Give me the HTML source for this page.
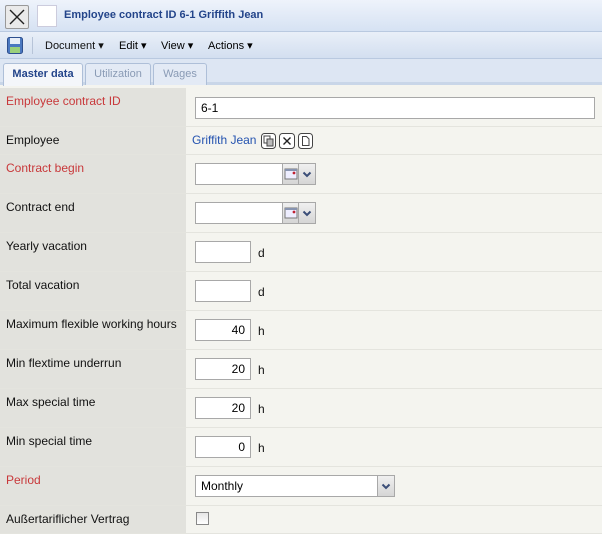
<!DOCTYPE html>
<html><head><style>
*{margin:0;padding:0;box-sizing:border-box}
body{width:602px;height:534px;overflow:hidden;font-family:"Liberation Sans",sans-serif;font-size:12px;background:#f4f4ef;position:relative}
.a{position:absolute}
.title{left:0;top:0;width:602px;height:32px;background:linear-gradient(#eef3fb,#d6e2f3);border-bottom:1px solid #b9c9e0}
.tb{left:0;top:32px;width:602px;height:27px;background:linear-gradient(#e9eff8,#d3dff0);border-bottom:1px solid #b9c9e0}
.tabs{left:0;top:59px;width:602px;height:26px;background:#dde6f3;border-bottom:3px solid #c9d6e8}
.tab{position:absolute;top:4px;height:22px;border:1px solid #aebfd8;border-bottom:none;background:#e3eaf5;color:#8a9bb5;font-size:11px;text-align:center;line-height:20px;border-radius:3px 3px 0 0}
.row{position:absolute;left:0;width:602px;border-bottom:1px solid #e4e4de}
.lab{position:absolute;left:0;top:0;bottom:0;width:186px;background:#e2e2dd;padding:6px 0 0 6px;color:#111}
.red{color:#c8383a}
.in{position:absolute;background:#fff;border:1px solid #a8a8a8;height:22px;padding:3px 5px;font-size:12px}
.r{text-align:right}
.u{position:absolute;font-size:12px;color:#111}
.dd{position:absolute;width:18px;height:22px;border:1px solid #a8a8a8;background:linear-gradient(#f0f0f0,#d5d5d5)}
</style></head><body>
<svg width="0" height="0" style="position:absolute"><defs>
<symbol id="chev" viewBox="0 0 16 20"><path d="M4.5 8.5L8 12L11.5 8.5" fill="none" stroke="#3b4e78" stroke-width="2"/></symbol>
<symbol id="cal" viewBox="0 0 16 20"><rect x="2" y="5" width="12" height="10" fill="#eef" stroke="#777"/><rect x="2" y="5" width="12" height="2" fill="#8894b0"/><circle cx="11" cy="9" r="1.4" fill="#c02030"/></symbol>
</defs></svg>
<div class="a title"></div>
<div class="a" style="left:5px;top:5px;width:24px;height:24px;border:1px solid #999;background:#eaeaea;border-radius:2px"><svg width="22" height="22"><path d="M4 4L18 18M18 4L4 18" stroke="#222" stroke-width="1.4"/></svg></div>
<div class="a" style="left:37px;top:5px;width:20px;height:22px;background:#fff;border:1px solid #ccd"></div>
<div class="a" style="left:64px;top:9px;font-weight:bold;font-size:11px;color:#23448a">Employee contract ID 6-1 Griffith Jean</div>
<div class="a tb"></div>
<svg class="a" style="left:7px;top:37px" width="16" height="17"><rect x="0.5" y="0.5" width="15" height="16" rx="2" fill="#4a78c0" stroke="#2d4f8e"/><rect x="3" y="1" width="10" height="6" fill="#e8eef8"/><rect x="3" y="10" width="10" height="6" fill="#9bd07a"/></svg>
<div class="a" style="left:32px;top:37px;width:1px;height:17px;background:#b7c4d8"></div>
<div class="a" style="left:45px;top:39px;font-size:11px;color:#111">Document ▾</div>
<div class="a" style="left:119px;top:39px;font-size:11px">Edit ▾</div>
<div class="a" style="left:161px;top:39px;font-size:11px">View ▾</div>
<div class="a" style="left:208px;top:39px;font-size:11px">Actions ▾</div>
<div class="a tabs"></div>
<div class="tab" style="left:3px;top:63px;width:80px;background:#f4f6fa;color:#23448a;font-weight:bold;height:23px">Master data</div>
<div class="tab" style="left:85px;top:63px;width:66px">Utilization</div>
<div class="tab" style="left:153px;top:63px;width:54px">Wages</div>

<div class="row" style="top:88px;height:39px"><div class="lab red">Employee contract ID</div></div>
<div class="in" style="left:195px;top:97px;width:400px">6-1</div>
<div class="row" style="top:127px;height:28px"><div class="lab">Employee</div></div>
<div class="a" style="left:192px;top:133px;color:#2453b0">Griffith Jean</div>
<svg class="a" style="left:260px;top:132px" width="56" height="18"><rect x="1.5" y="1.5" width="14" height="15" rx="3" fill="#fff" stroke="#444"/><rect x="4" y="4" width="6" height="7" fill="#fff" stroke="#444"/><rect x="7" y="7" width="6" height="7" fill="#bbb" stroke="#444"/><rect x="19.5" y="1.5" width="15" height="15" rx="3" fill="#fff" stroke="#444"/><path d="M23.5 5.5L30.5 12.5M30.5 5.5L23.5 12.5" stroke="#222" stroke-width="1.4"/><rect x="38.5" y="1.5" width="14" height="15" rx="3" fill="#fff" stroke="#444"/><path d="M42.5 4.5h4l2.5 2.5v6.5h-6.5z" fill="#fff" stroke="#444"/></svg>
<div class="row" style="top:155px;height:39px"><div class="lab red">Contract begin</div></div>
<div class="in" style="left:195px;top:163px;width:107px"></div><div class="dd" style="left:282px;top:163px"><svg width="16" height="20"><use href="#cal"/></svg></div><div class="dd" style="left:298px;top:163px"><svg width="16" height="20"><use href="#chev"/></svg></div>
<div class="row" style="top:194px;height:39px"><div class="lab">Contract end</div></div>
<div class="in" style="left:195px;top:202px;width:107px"></div><div class="dd" style="left:282px;top:202px"><svg width="16" height="20"><use href="#cal"/></svg></div><div class="dd" style="left:298px;top:202px"><svg width="16" height="20"><use href="#chev"/></svg></div>
<div class="row" style="top:233px;height:39px"><div class="lab">Yearly vacation</div></div>
<div class="in" style="left:195px;top:241px;width:56px"></div><div class="u" style="left:258px;top:246px">d</div>
<div class="row" style="top:272px;height:39px"><div class="lab">Total vacation</div></div>
<div class="in" style="left:195px;top:280px;width:56px"></div><div class="u" style="left:258px;top:285px">d</div>
<div class="row" style="top:311px;height:39px"><div class="lab">Maximum flexible working hours</div></div>
<div class="in r" style="left:195px;top:319px;width:56px">40</div><div class="u" style="left:258px;top:324px">h</div>
<div class="row" style="top:350px;height:39px"><div class="lab">Min flextime underrun</div></div>
<div class="in r" style="left:195px;top:358px;width:56px">20</div><div class="u" style="left:258px;top:363px">h</div>
<div class="row" style="top:389px;height:39px"><div class="lab">Max special time</div></div>
<div class="in r" style="left:195px;top:397px;width:56px">20</div><div class="u" style="left:258px;top:402px">h</div>
<div class="row" style="top:428px;height:39px"><div class="lab">Min special time</div></div>
<div class="in r" style="left:195px;top:436px;width:56px">0</div><div class="u" style="left:258px;top:441px">h</div>
<div class="row" style="top:467px;height:39px"><div class="lab red">Period</div></div>
<div class="in" style="left:195px;top:475px;width:200px">Monthly</div><div class="dd" style="left:377px;top:475px"><svg width="16" height="20"><use href="#chev"/></svg></div>
<div class="row" style="top:506px;height:28px"><div class="lab">Außertariflicher Vertrag</div></div>
<div class="a" style="left:196px;top:512px;width:13px;height:13px;border:1px solid #888;background:linear-gradient(#e6e6e6,#fff)"></div>
</body></html>
